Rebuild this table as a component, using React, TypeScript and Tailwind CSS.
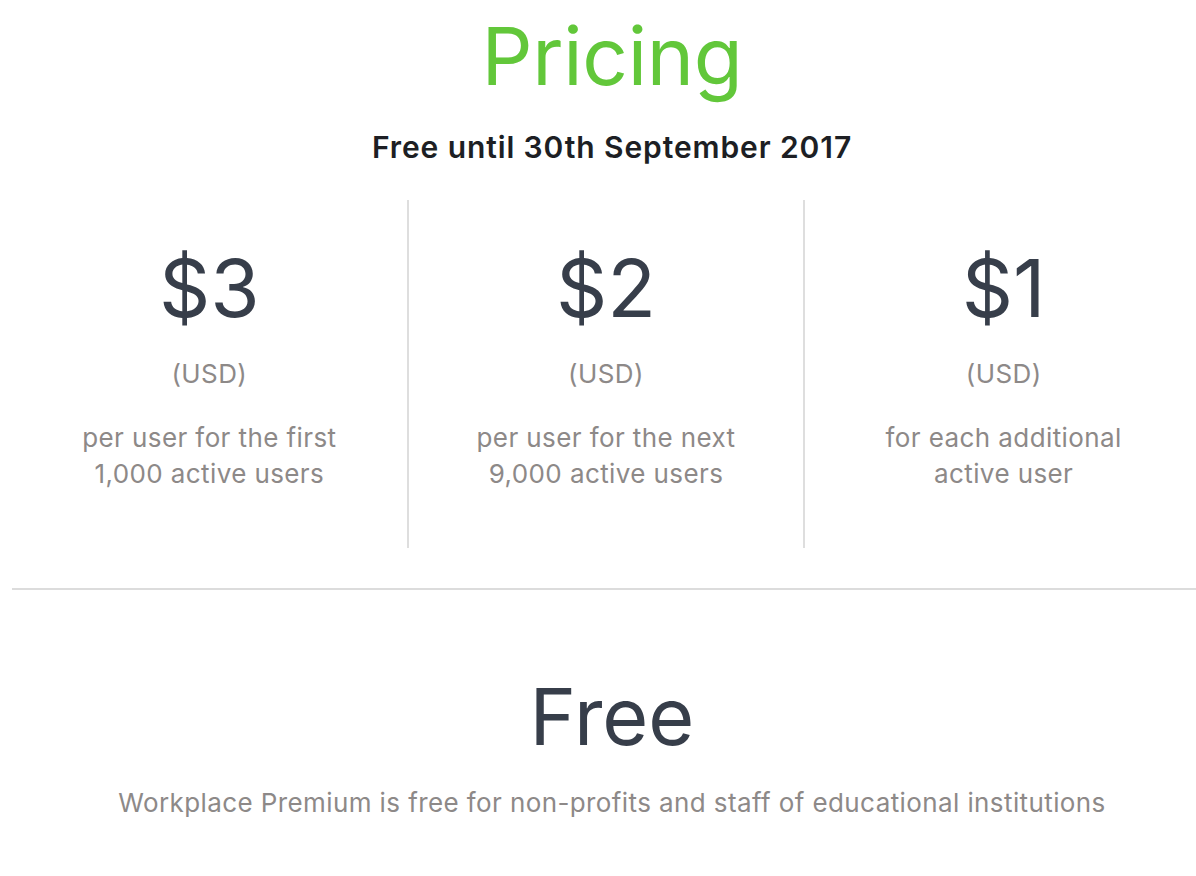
import React from "react";

const tiers = [
  { price: "$3", lines: ["per user for the first", "1,000 active users"] },
  { price: "$2", lines: ["per user for the next", "9,000 active users"] },
  { price: "$1", lines: ["for each additional", "active user"] },
];

function App() {
  return (
    <div className="w-[1196px] h-[876px] overflow-hidden bg-white font-['Inter','Noto_Sans',sans-serif]">
      <div className="ml-[12px] w-[1200px] flex flex-col items-center">
        <h1 className="mt-[8px] h-[96px] leading-[96px] text-[80px] text-[#62c73a] tracking-[-0.3px]">Pricing</h1>
        <h2 className="mt-[23px] h-[40px] leading-[40px] text-[30px] font-semibold tracking-[0.9px] text-[#1d1f24]">
          Free until 30th September 2017
        </h2>
        <div className="mt-[33px] self-start w-[1190px] grid grid-cols-3">
          {tiers.map((t, i) => (
            <div
              key={t.price}
              className={
                "h-[348px] flex flex-col items-center " +
                (i < 2 ? "border-r-2 border-[#dedede]" : "")
              }
            >
              <div className="mt-[40px] h-[96px] leading-[96px] text-[80px] text-[#373e4a]">{t.price}</div>
              <div className="mt-[20px] h-[36px] leading-[36px] text-[26px] tracking-[0.4px] text-[#8d8988]">(USD)</div>
              <div className="mt-[28px] text-center leading-[36px] text-[26px] tracking-[0.4px] text-[#8d8988]">
                {t.lines.map((l) => (
                  <div key={l}>{l}</div>
                ))}
              </div>
            </div>
          ))}
        </div>
        <div className="mt-[40px] w-[1200px] h-[2px] bg-[#dcdcdc]" />
        <div className="mt-[78px] h-[96px] leading-[96px] text-[79px] text-[#373e4a]">Free</div>
        <p className="mt-[21px] text-[26px] leading-[36px] tracking-[0.4px] text-[#8d8988]">
          Workplace Premium is free for non-profits and staff of educational institutions
        </p>
      </div>
    </div>
  );
}

export default App;
